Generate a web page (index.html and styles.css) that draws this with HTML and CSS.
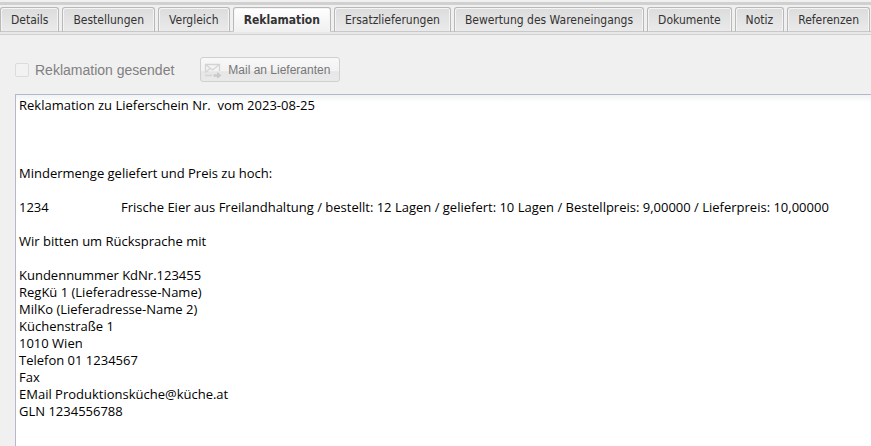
FILE: index.html
```html
<!DOCTYPE html>
<html lang="de">
<head>
    <meta charset="UTF-8">
    <meta name="viewport" content="width=device-width, initial-scale=1.0">
    <title>Reklamation</title>
    <link rel="stylesheet" href="styles.css">
</head>
<body>

    <div class="tabs" role="tablist">
        <button class="tab" role="tab">Details</button>
        <button class="tab" role="tab">Bestellungen</button>
        <button class="tab" role="tab">Vergleich</button>
        <button class="tab active" role="tab" aria-selected="true">Reklamation</button>
        <button class="tab" role="tab">Ersatzlieferungen</button>
        <button class="tab" role="tab">Bewertung des Wareneingangs</button>
        <button class="tab" role="tab">Dokumente</button>
        <button class="tab" role="tab">Notiz</button>
        <button class="tab" role="tab">Referenzen</button>
    </div>

    <div class="panel">
        <div class="toolbar">
            <label class="check" for="gesendet">
                <input type="checkbox" id="gesendet" disabled>
                Reklamation gesendet
            </label>
            <button class="mail-btn" disabled>
                <svg width="18" height="16" viewBox="0 0 18 16" fill="none" stroke="#d4d4d4" stroke-width="1.3">
                    <path d="M1.5 9.5V2.5h14V9M1.5 2.5l7 5.5 7-5.5M1.5 10.5l4.5-4M1 13.5h7"/>
                    <path d="M9.5 12.3h3.5V9.8l4.5 3.6L13 17v-2.3H9.5z" fill="#cacaca" stroke="none"/>
                </svg>
                Mail an Lieferanten
            </button>
        </div>
        <textarea class="message" aria-label="Reklamationstext" spellcheck="false">Reklamation zu Lieferschein Nr.  vom 2023-08-25



Mindermenge geliefert und Preis zu hoch:

1234&#9;&#9;&#9;Frische Eier aus Freilandhaltung / bestellt: 12 Lagen / geliefert: 10 Lagen / Bestellpreis: 9,00000 / Lieferpreis: 10,00000

Wir bitten um Rücksprache mit

Kundennummer KdNr.123455
RegKü 1 (Lieferadresse-Name)
MilKo (Lieferadresse-Name 2)
Küchenstraße 1
1010 Wien
Telefon 01 1234567
Fax
EMail Produktionsküche@küche.at
GLN 1234556788</textarea>
    </div>

</body>
</html>
```

FILE: styles.css
```css
* {
    box-sizing: border-box;
}
body {
    margin: 0;
    min-height: 100vh;
    display: flex;
    flex-direction: column;
    background: #f0f0f0;
    font-family: "Open Sans", Tahoma, sans-serif;
    overflow: hidden;
}
.tabs {
    display: flex;
    gap: 3px;
    height: 33px;
    margin-top: 2px;
    padding-top: 2px;
    border-top: 3px solid #d0d0d0;
    border-bottom: 1px solid #d0d0d0;
    background: linear-gradient(#f0f0f0 26px, #c8c8c8 26px, #c8c8c8 27px, #e8e8e8 27px);
}
.tab {
    flex: none;
    height: 25px;
    padding: 0 10px;
    border: 1px solid #b8b8b8;
    border-bottom-color: #c8c8c8;
    border-radius: 3px 3px 0 0;
    background: linear-gradient(#dcdcdc, #eaeaea);
    box-shadow: inset 1px 1px #f4f4f4, inset -1px 0 #f4f4f4;
    color: #333;
    font: 12px "DejaVu Sans Condensed", Tahoma, sans-serif;
    white-space: nowrap;
}
.tab.active {
    background: linear-gradient(#fff, #f0f0f0);
    border-bottom-color: #f0f0f0;
    font-weight: bold;
}
.panel {
    flex: 1;
    display: flex;
    flex-direction: column;
    padding: 22px 0 0 15px;
}
.toolbar {
    display: flex;
    align-items: center;
    gap: 26px;
    height: 25px;
    margin-bottom: 12px;
}
.check {
    display: flex;
    align-items: center;
    gap: 6px;
    color: #808080;
    font: 14px "Liberation Sans", Arial, sans-serif;
}
.check input {
    appearance: none;
    width: 14px;
    height: 14px;
    margin: 0;
    border: 1px solid #dcdcdc;
    border-radius: 2px;
    background: #f2f2f2;
}
.mail-btn {
    display: flex;
    align-items: center;
    gap: 6px;
    height: 25px;
    padding: 0 9px 0 3px;
    border: 1px solid #d0d0d0;
    border-radius: 3px;
    background: linear-gradient(#f8f8f8, #f2f2f2 55%, #e6e6e6 60%, #eaeaea);
    color: #777;
    font: 12px "Liberation Sans", Arial, sans-serif;
}
.message {
    flex: 1;
    width: 100%;
    margin: 0;
    padding: 2px 3px;
    border: 1px solid #b5b8c8;
    border-width: 1px 0 0 1px;
    outline: none;
    resize: none;
    background: linear-gradient(#f0f3f4, #fff 8px);
    color: #000;
    font: 13px/17px "Open Sans", Tahoma, sans-serif;
    tab-size: 34px;
}
```
